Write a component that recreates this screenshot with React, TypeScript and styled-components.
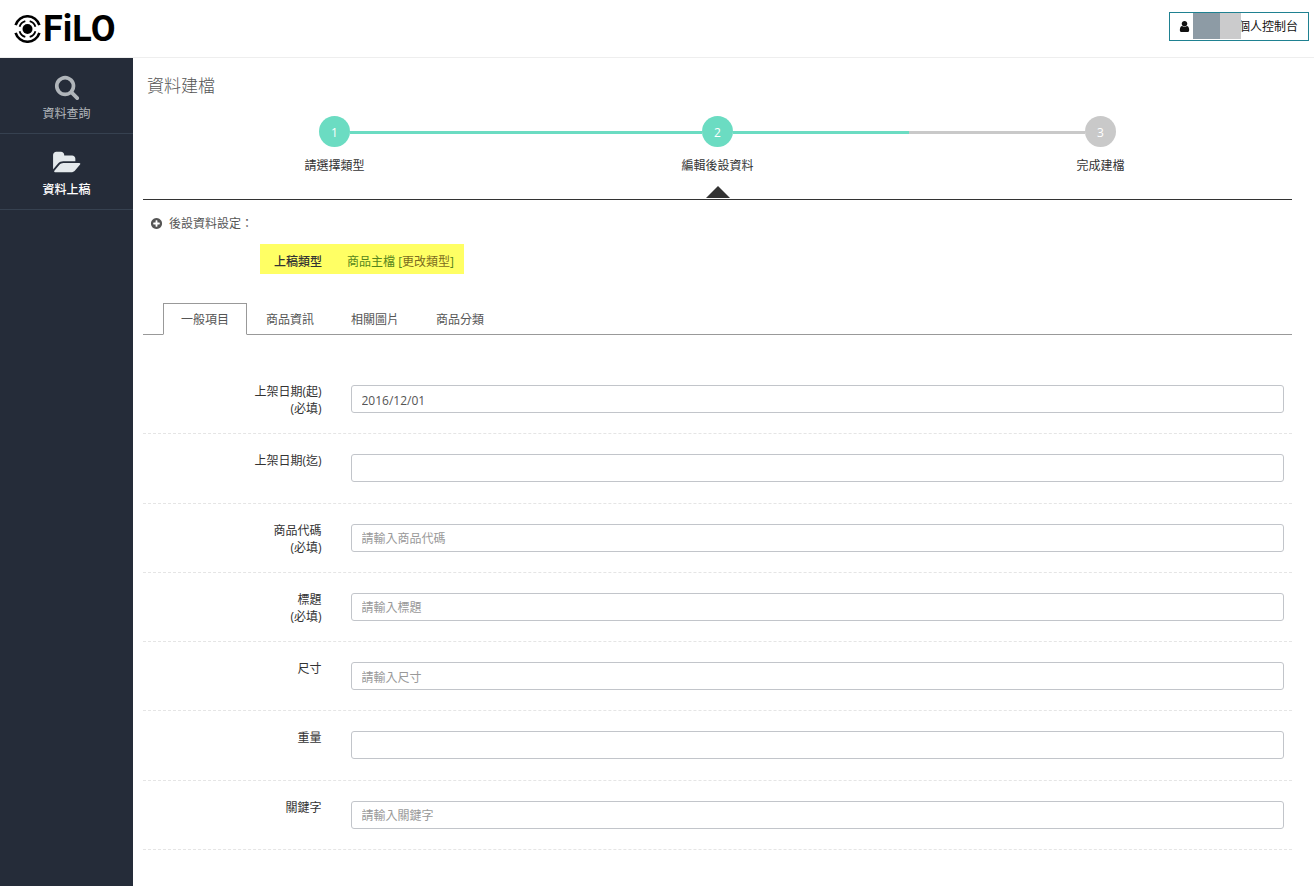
import React from 'react';
import styled, { createGlobalStyle } from 'styled-components';

const GlobalStyle = createGlobalStyle`
  *, *::before, *::after { box-sizing: border-box; }
  body {
    margin: 0;
    background: #fff;
    color: #333;
    font-family: "Open Sans", "Noto Sans CJK TC", sans-serif;
    font-size: 12px;
    line-height: 17px;
  }
  button, input { font: inherit; }
`;

const Page = styled.div`
  display: flex;
  flex-direction: column;
  min-height: 100vh;
`;

const Header = styled.header`
  display: flex;
  align-items: center;
  justify-content: space-between;
  height: 58px;
  padding: 0 5px 4px 14px;
  border-bottom: 1px solid #eee;
`;

const Logo = styled.a`
  display: flex;
  align-items: center;
  gap: 2px;
  padding-top: 4px;
  color: #000;
  font-family: Roboto, sans-serif;
  font-size: 36px;
  font-weight: 700;
  line-height: 40px;
  text-decoration: none;
`;

const AccountButton = styled.button`
  display: flex;
  align-items: center;
  height: 29px;
  padding: 0 10px 0 8px;
  border: 1px solid #1f8191;
  background: #fff;
  color: #111;
  white-space: nowrap;
`;

const HiddenName = styled.span`
  position: relative;
  width: 48px;
  height: 26px;
  margin: 0 -3px 1px 2px;
  background: linear-gradient(to right, #8d9ba5 27px, #cbcbcc 27px);
`;

const Body = styled.div`
  display: flex;
  flex: 1;
`;

const Sidebar = styled.nav`
  flex: 0 0 133px;
  background: #252c39;
`;

const NavLink = styled.a<{ $active?: boolean }>`
  display: flex;
  flex-direction: column;
  align-items: center;
  gap: 5px;
  height: 76px;
  padding-top: 16px;
  border-bottom: 1px solid #364150;
  color: ${p => (p.$active ? '#fff' : '#b4b9be')};
  font-weight: ${p => (p.$active ? 500 : 400)};
  text-decoration: none;

  svg { color: ${p => (p.$active ? '#e4e9ec' : '#b0b5ba')}; }
`;

const Main = styled.main`
  flex: 1;
  min-width: 0;
  padding: 16px 22px 20px 10px;
`;

const Title = styled.h1`
  margin: 0;
  padding-left: 4px;
  color: #555;
  font-size: 17px;
  font-weight: 300;
  line-height: 24px;
`;

const Steps = styled.ol`
  display: grid;
  grid-template-columns: repeat(3, 1fr);
  height: 102px;
  margin: 0;
  padding: 18px 0 0;
  border-bottom: 1px solid #333;
  list-style: none;
`;

const stepColor = (on?: boolean) => (on ? '#6bdcc2' : '#c9c9c9');

const Step = styled.li`
  display: flex;
  flex-direction: column;
  align-items: center;
`;

const Track = styled.div`
  display: flex;
  align-items: center;
  align-self: stretch;
`;

const Bar = styled.span<{ $on?: boolean; $hidden?: boolean }>`
  flex: 1;
  height: 3px;
  margin-top: 2px;
  background: ${p => (p.$hidden ? 'transparent' : stepColor(p.$on))};
`;

const Circle = styled.span<{ $on?: boolean }>`
  width: 31px;
  height: 31px;
  border-radius: 50%;
  background: ${p => stepColor(p.$on)};
  color: #fff;
  font-weight: 500;
  line-height: 33px;
  text-align: center;
`;

const StepLabel = styled.span`
  margin-top: 10px;
`;

const Pointer = styled.span`
  margin-top: 12px;
  border: 12px solid transparent;
  border-top: 0;
  border-bottom-color: #333;
`;

const SectionTitle = styled.h2`
  display: flex;
  align-items: center;
  gap: 6px;
  margin: 15px 0 0;
  padding-left: 7px;
  color: #555;
  font-size: 12px;
  font-weight: 400;
  line-height: 17px;
`;

const TypeRow = styled.div`
  display: flex;
  width: fit-content;
  margin: 12px 0 0 117px;
  padding: 9px 10px 4px 14px;
  background: #ffff64;
  gap: 25px;
`;

const TypeName = styled.span`
  color: #333;
  font-weight: 500;
`;

const TypeValue = styled.span`
  color: #55851c;
`;

const TypeLink = styled.a`
  color: #7b6b1e;
  text-decoration: none;
`;

const Tabs = styled.div`
  display: flex;
  gap: 1px;
  margin-top: 29px;
  padding-left: 20px;
  border-bottom: 1px solid #999;
`;

const Tab = styled.button<{ $active?: boolean }>`
  height: 32px;
  margin-bottom: -1px;
  padding: 0 17px;
  border: 1px solid ${p => (p.$active ? '#999' : 'transparent')};
  border-bottom-color: ${p => (p.$active ? '#fff' : 'transparent')};
  background: ${p => (p.$active ? '#fff' : 'transparent')};
  color: #555;
`;

const Form = styled.form`
  display: grid;
  grid-auto-rows: 1fr;
  min-height: 485px;
  margin-top: 30px;
`;

const Row = styled.div`
  display: grid;
  grid-template-columns: 1fr 5fr;
  align-items: start;
  border-bottom: 1px dashed #e5e5e5;
`;

const Label = styled.label`
  padding: 18px 13px 0 0;
  text-align: right;
`;

const Required = styled.span`
  display: block;
`;

const Field = styled.div`
  padding: 20px 8px 20px 16px;
`;

const Input = styled.input`
  display: block;
  width: 100%;
  height: 28px;
  padding: 2px 10px 0;
  border: 1px solid #c2c5ca;
  border-radius: 3px;
  background: #fff;
  color: #555;

  &::placeholder { color: #999; opacity: 1; }
`;

const icons = {
  search:
    'M1216 832q0-185-131.5-316.5t-316.5-131.5-316.5 131.5-131.5 316.5 131.5 316.5 316.5 131.5 316.5-131.5 131.5-316.5zm512 832q0 52-38 90t-90 38q-54 0-90-38l-343-342q-179 124-399 124-143 0-273.5-55.5t-225-150-150-225-55.5-273.5 55.5-273.5 150-225 225-150 273.5-55.5 273.5 55.5 225 150 150 225 55.5 273.5q0 220-124 399l343 343q37 37 37 90z',
  folder:
    'M1943 952q0 31-31 66l-336 396q-43 51-120.5 86.5t-143.5 35.5h-1088q-34 0-60.5-13t-26.5-43q0-31 31-66l336-396q43-51 120.5-86.5t143.5-35.5h1088q34 0 60.5 13t26.5 43zm-343-344v160h-832q-94 0-197 47.5t-164 119.5l-337 396-5 6q0-4-.5-12.5t-.5-12.5v-960q0-92 66-158t158-66h320q92 0 158 66t66 158v32h544q92 0 158 66t66 158z',
  plus:
    'M1344 960v-128q0-26-19-45t-45-19h-256v-256q0-26-19-45t-45-19h-128q-26 0-45 19t-19 45v256h-256q-26 0-45 19t-19 45v128q0 26 19 45t45 19h256v256q0 26 19 45t45 19h128q26 0 45-19t19-45v-256h256q26 0 45-19t19-45zm320-64q0 209-103 385.5t-279.5 279.5-385.5 103-385.5-103-279.5-279.5-103-385.5 103-385.5 279.5-279.5 385.5-103 385.5 103 279.5 279.5 103 385.5z',
  user:
    'M1536 1399q0 109-62.5 187t-150.5 78h-854q-88 0-150.5-78t-62.5-187q0-85 8.5-160.5t31.5-152 58.5-131 94-89 134.5-34.5q131 128 313 128t313-128q76 0 134.5 34.5t94 89 58.5 131 31.5 152 8.5 160.5zm-256-887q0 159-112.5 271.5t-271.5 112.5-271.5-112.5-112.5-271.5 112.5-271.5 271.5-112.5 271.5 112.5 112.5 271.5z',
};

function Icon({ name, size, wide }: { name: keyof typeof icons; size: number; wide?: boolean }) {
  return (
    <svg
      width={wide ? Math.round((size * 2048) / 1792) : size}
      height={size}
      viewBox={`0 0 ${wide ? 2048 : 1792} 1792`}
      fill="currentColor"
      aria-hidden="true"
    >
      <path d={icons[name]} />
    </svg>
  );
}

function Emblem() {
  return (
    <svg width="27" height="28" viewBox="0 0 27 28" fill="none" stroke="#000" aria-hidden="true">
      <circle cx="13.5" cy="14" r="5" fill="#000" stroke="none" />
      <path d="M11.3 6.1A8.2 8.2 0 0 0 5.6 11.8M5.6 16.2A8.2 8.2 0 0 0 11.3 21.9M15.7 21.9A8.2 8.2 0 0 0 21.4 16.2M21.4 11.8A8.2 8.2 0 0 0 15.7 6.1" strokeWidth="1.8" />
      <path d="M1.6 10.2A12.4 12.4 0 0 1 25.4 10.2" strokeWidth="2.6" />
      <path d="M1.6 17.8A12.4 12.4 0 0 0 25.4 17.8" strokeWidth="2.6" />
    </svg>
  );
}

const steps = [
  { label: '請選擇類型', done: true, next: true },
  { label: '編輯後設資料', done: true, next: true, current: true },
  { label: '完成建檔', done: false, next: false },
];

const tabs = ['一般項目', '商品資訊', '相關圖片', '商品分類'];

const fields = [
  { id: 'start', label: '上架日期(起)', required: true, value: '2016/12/01' },
  { id: 'end', label: '上架日期(迄)' },
  { id: 'code', label: '商品代碼', required: true, placeholder: '請輸入商品代碼' },
  { id: 'title', label: '標題', required: true, placeholder: '請輸入標題' },
  { id: 'size', label: '尺寸', placeholder: '請輸入尺寸' },
  { id: 'weight', label: '重量' },
  { id: 'keywords', label: '關鍵字', placeholder: '請輸入關鍵字' },
];

export default function App() {
  return (
    <Page>
      <GlobalStyle />
      <Header>
        <Logo href="#">
          <Emblem />
          FiLO
        </Logo>
        <AccountButton type="button">
          <Icon name="user" size={13} />
          <HiddenName />
          個人控制台
        </AccountButton>
      </Header>
      <Body>
        <Sidebar>
          <NavLink href="#search">
            <Icon name="search" size={26} />
            資料查詢
          </NavLink>
          <NavLink href="#upload" $active>
            <Icon name="folder" size={26} wide />
            資料上稿
          </NavLink>
        </Sidebar>
        <Main>
          <Title>資料建檔</Title>
          <Steps>
            {steps.map((s, i) => (
              <Step key={s.label}>
                <Track>
                  <Bar $hidden={i === 0} $on={s.done} />
                  <Circle $on={s.done}>{i + 1}</Circle>
                  <Bar $hidden={i === steps.length - 1} $on={s.next} />
                </Track>
                <StepLabel>{s.label}</StepLabel>
                {s.current && <Pointer />}
              </Step>
            ))}
          </Steps>
          <SectionTitle>
            <Icon name="plus" size={13} />
            後設資料設定：
          </SectionTitle>
          <TypeRow>
            <TypeName>上稿類型</TypeName>
            <TypeValue>
              商品主檔 [<TypeLink href="#type">更改類型</TypeLink>]
            </TypeValue>
          </TypeRow>
          <Tabs role="tablist">
            {tabs.map((t, i) => (
              <Tab key={t} type="button" role="tab" aria-selected={i === 0} $active={i === 0}>
                {t}
              </Tab>
            ))}
          </Tabs>
          <Form>
            {fields.map(f => (
              <Row key={f.id}>
                <Label htmlFor={f.id}>
                  {f.label}
                  {f.required && <Required>(必填)</Required>}
                </Label>
                <Field>
                  <Input id={f.id} type="text" defaultValue={f.value} placeholder={f.placeholder} />
                </Field>
              </Row>
            ))}
          </Form>
        </Main>
      </Body>
    </Page>
  );
}
